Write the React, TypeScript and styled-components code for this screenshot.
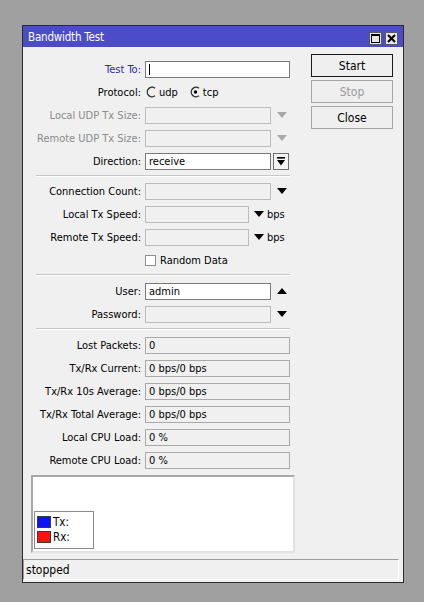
import React from "react";
import styled, { createGlobalStyle, css } from "styled-components";

const GlobalStyle = createGlobalStyle`
  html, body { margin: 0; padding: 0; background: #a0a0a0; }
  body {
    font-family: "DejaVu Sans Condensed", "Liberation Sans", Arial, sans-serif;
    font-size: 11px;
    color: #000;
  }
  * { box-sizing: border-box; }
`;

const Page = styled.div`
  padding: 25px 0 20px 22px;
`;

const Window = styled.div`
  width: 382px;
  height: 558px;
  border: 1px solid #2b2b2b;
  background: #f0f0f0;
  display: flex;
  flex-direction: column;
`;

const TitleBar = styled.div`
  height: 21px;
  background: #4c4cc9;
  color: #fff;
  display: flex;
  align-items: center;
  justify-content: space-between;
  padding: 1px 5px 0 5px;
  font-size: 11.5px;
`;

const TitleText = styled.span`
  letter-spacing: -0.2px;
`;

const TitleButtons = styled.div`
  display: flex;
  gap: 3px;
  margin-top: 2px;
`;

const TitleButton = styled.div`
  width: 13px;
  height: 13px;
  background: #e6e6e6;
  border: 1px solid #5a5a5a;
  display: flex;
  align-items: center;
  justify-content: center;
`;

const Body = styled.div`
  display: flex;
  flex-direction: row;
`;

const FormCol = styled.div`
  width: 277px;
  padding-top: 13px;
  display: flex;
  flex-direction: column;
  gap: 5px;
`;

const Row = styled.div`
  display: grid;
  grid-template-columns: 118px 1fr;
  column-gap: 4px;
  height: 18px;
  align-items: center;
`;

const Label = styled.div<{ $tone?: "normal" | "blue" | "disabled" }>`
  text-align: right;
  white-space: nowrap;
  color: ${(p) =>
    p.$tone === "blue" ? "#2a2aa8" : p.$tone === "disabled" ? "#8a8a8a" : "#000"};
`;

const Field = styled.div`
  display: flex;
  align-items: center;
  height: 18px;
`;

const Input = styled.div<{ $width: number; $kind?: "edit" | "disabled" | "output" }>`
  width: ${(p) => p.$width}px;
  height: 17px;
  padding: 0 3px;
  display: flex;
  align-items: center;
  white-space: nowrap;
  ${(p) =>
    p.$kind === "edit"
      ? css`
          background: #fff;
          border: 1px solid #7a7a7a;
        `
      : p.$kind === "output"
      ? css`
          background: #f0f0f0;
          border: 1px solid #a9a9a9;
        `
      : css`
          background: #f0f0f0;
          border: 1px solid #bcbcbc;
        `}
`;

const Caret = styled.span`
  width: 1px;
  height: 11px;
  background: #000;
`;

const ArrowSlot = styled.div<{ $w?: number }>`
  width: ${(p) => p.$w ?? 19}px;
  display: flex;
  align-items: center;
  justify-content: center;
  padding-left: 3px;
`;

const Unit = styled.span`
  margin-left: 2px;
`;

const DropButton = styled.div`
  width: 16px;
  height: 17px;
  margin-left: 2px;
  border: 1px solid #6e6e6e;
  background: #f4f4f4;
  display: flex;
  align-items: center;
  justify-content: center;
`;

const RadioGroup = styled.div`
  display: flex;
  align-items: center;
  gap: 12px;
  padding-left: 1px;
`;

const RadioItem = styled.label`
  display: flex;
  align-items: center;
  gap: 2px;
`;

const CheckItem = styled.label`
  display: flex;
  align-items: center;
  gap: 4px;
`;

const CheckBox = styled.span`
  width: 11px;
  height: 11px;
  background: #fff;
  border: 1px solid #8e8e8e;
`;

const Separator = styled.div<{ $after?: number }>`
  margin-left: 13px;
  margin-bottom: ${(p) => p.$after ?? 0}px;
  width: 254px;
  height: 2px;
  border-top: 1px solid #c6c6c6;
  border-bottom: 1px solid #ffffff;
`;

const ButtonCol = styled.div`
  margin-left: 11px;
  padding-top: 7px;
  display: flex;
  flex-direction: column;
  gap: 3px;
`;

const Button = styled.div<{ $primary?: boolean; $disabled?: boolean }>`
  width: 82px;
  height: 23px;
  display: flex;
  align-items: center;
  justify-content: center;
  background: #efefef;
  font-size: 12px;
  border: 1px solid ${(p) => (p.$primary ? "#1a1a1a" : "#a5a5a5")};
  color: ${(p) => (p.$disabled ? "#9a9a9a" : "#000")};
`;

const Graph = styled.div`
  margin: 6px 0 0 8px;
  width: 264px;
  height: 78px;
  background: #fff;
  border-top: 2px solid #a8a8a8;
  border-left: 2px solid #a8a8a8;
  border-right: 2px solid #e2e2e2;
  border-bottom: 2px solid #e2e2e2;
  display: flex;
  flex-direction: column;
  justify-content: flex-end;
  padding: 0 0 2px 1px;
`;

const Legend = styled.div`
  width: 60px;
  height: 38px;
  border: 1px solid #8a8a8a;
  background: #fff;
  display: flex;
  flex-direction: column;
  gap: 3px;
  padding: 4px 0 0 2px;
`;

const LegendRow = styled.div`
  display: flex;
  align-items: center;
  gap: 2px;
  height: 12px;
  font-size: 11.5px;
`;

const Swatch = styled.span<{ $color: string }>`
  width: 14px;
  height: 12px;
  background: ${(p) => p.$color};
  border: 1px solid #3a3a3a;
`;

const StatusBar = styled.div`
  margin: 6px 4px 0 0;
  height: 21px;
  border-top: 1px solid #9c9c9c;
  border-left: 1px solid #9c9c9c;
  border-right: 1px solid #ffffff;
  border-bottom: 1px solid #ffffff;
  display: flex;
  align-items: center;
  padding-left: 2px;
  font-size: 12px;
`;

const Arrow = ({ up, color }: { up?: boolean; color: string }) => (
  <svg width="10" height="6" viewBox="0 0 10 6">
    {up ? (
      <polygon points="0,6 10,6 5,0" fill={color} />
    ) : (
      <polygon points="0,0 10,0 5,6" fill={color} />
    )}
  </svg>
);

const Radio = ({ checked }: { checked?: boolean }) => (
  <svg width="11" height="12" viewBox="0 0 11 12">
    <path d="M9 2.2 A4.8 4.8 0 1 0 9 9.8" fill="none" stroke="#333" strokeWidth="1.4" />
    {checked && <circle cx="5.5" cy="6" r="1.7" fill="#000" />}
  </svg>
);

type FieldRow = {
  label: string;
  tone?: "normal" | "blue" | "disabled";
  children: React.ReactNode;
};

const FormRow = ({ label, tone, children }: FieldRow) => (
  <Row>
    <Label $tone={tone}>{label}</Label>
    <Field>{children}</Field>
  </Row>
);

const outputs = [
  ["Lost Packets:", "0"],
  ["Tx/Rx Current:", "0 bps/0 bps"],
  ["Tx/Rx 10s Average:", "0 bps/0 bps"],
  ["Tx/Rx Total Average:", "0 bps/0 bps"],
  ["Local CPU Load:", "0 %"],
  ["Remote CPU Load:", "0 %"],
];

export default function App() {
  return (
    <>
      <GlobalStyle />
      <Page>
        <Window>
          <TitleBar>
            <TitleText>Bandwidth Test</TitleText>
            <TitleButtons>
              <TitleButton>
                <svg width="9" height="9" viewBox="0 0 9 9">
                  <rect x="0.5" y="0.5" width="8" height="8" fill="none" stroke="#000" strokeWidth="1" />
                  <rect x="0" y="0" width="9" height="2" fill="#000" />
                </svg>
              </TitleButton>
              <TitleButton>
                <svg width="9" height="9" viewBox="0 0 9 9">
                  <path d="M1 1 L8 8 M8 1 L1 8" stroke="#000" strokeWidth="2" />
                </svg>
              </TitleButton>
            </TitleButtons>
          </TitleBar>
          <Body>
            <FormCol>
              <FormRow label="Test To:" tone="blue">
                <Input $width={145} $kind="edit">
                  <Caret />
                </Input>
              </FormRow>
              <FormRow label="Protocol:">
                <RadioGroup>
                  <RadioItem>
                    <Radio />
                    udp
                  </RadioItem>
                  <RadioItem>
                    <Radio checked />
                    tcp
                  </RadioItem>
                </RadioGroup>
              </FormRow>
              <FormRow label="Local UDP Tx Size:" tone="disabled">
                <Input $width={126} />
                <ArrowSlot>
                  <Arrow color="#a8a8a8" />
                </ArrowSlot>
              </FormRow>
              <FormRow label="Remote UDP Tx Size:" tone="disabled">
                <Input $width={126} />
                <ArrowSlot>
                  <Arrow color="#a8a8a8" />
                </ArrowSlot>
              </FormRow>
              <FormRow label="Direction:">
                <Input $width={126} $kind="edit">
                  receive
                </Input>
                <DropButton>
                  <svg width="8" height="9" viewBox="0 0 8 9">
                    <rect x="0" y="0" width="8" height="1.6" fill="#000" />
                    <polygon points="0,3 8,3 4,8.5" fill="#000" />
                  </svg>
                </DropButton>
              </FormRow>
              <Separator />
              <FormRow label="Connection Count:">
                <Input $width={126} />
                <ArrowSlot>
                  <Arrow color="#000" />
                </ArrowSlot>
              </FormRow>
              <FormRow label="Local Tx Speed:">
                <Input $width={104} />
                <ArrowSlot $w={16}>
                  <Arrow color="#000" />
                </ArrowSlot>
                <Unit>bps</Unit>
              </FormRow>
              <FormRow label="Remote Tx Speed:">
                <Input $width={104} />
                <ArrowSlot $w={16}>
                  <Arrow color="#000" />
                </ArrowSlot>
                <Unit>bps</Unit>
              </FormRow>
              <FormRow label="">
                <CheckItem>
                  <CheckBox />
                  Random Data
                </CheckItem>
              </FormRow>
              <Separator $after={1} />
              <FormRow label="User:">
                <Input $width={126} $kind="edit">
                  admin
                </Input>
                <ArrowSlot>
                  <Arrow up color="#000" />
                </ArrowSlot>
              </FormRow>
              <FormRow label="Password:">
                <Input $width={126} />
                <ArrowSlot>
                  <Arrow color="#000" />
                </ArrowSlot>
              </FormRow>
              <Separator $after={1} />
              {outputs.map(([l, v]) => (
                <FormRow key={l} label={l}>
                  <Input $width={145} $kind="output">
                    {v}
                  </Input>
                </FormRow>
              ))}
            </FormCol>
            <ButtonCol>
              <Button $primary>Start</Button>
              <Button $disabled>Stop</Button>
              <Button>Close</Button>
            </ButtonCol>
          </Body>
          <Graph>
            <Legend>
              <LegendRow>
                <Swatch $color="#0a14ff" />
                Tx:
              </LegendRow>
              <LegendRow>
                <Swatch $color="#ff1010" />
                Rx:
              </LegendRow>
            </Legend>
          </Graph>
          <StatusBar>stopped</StatusBar>
        </Window>
      </Page>
    </>
  );
}
